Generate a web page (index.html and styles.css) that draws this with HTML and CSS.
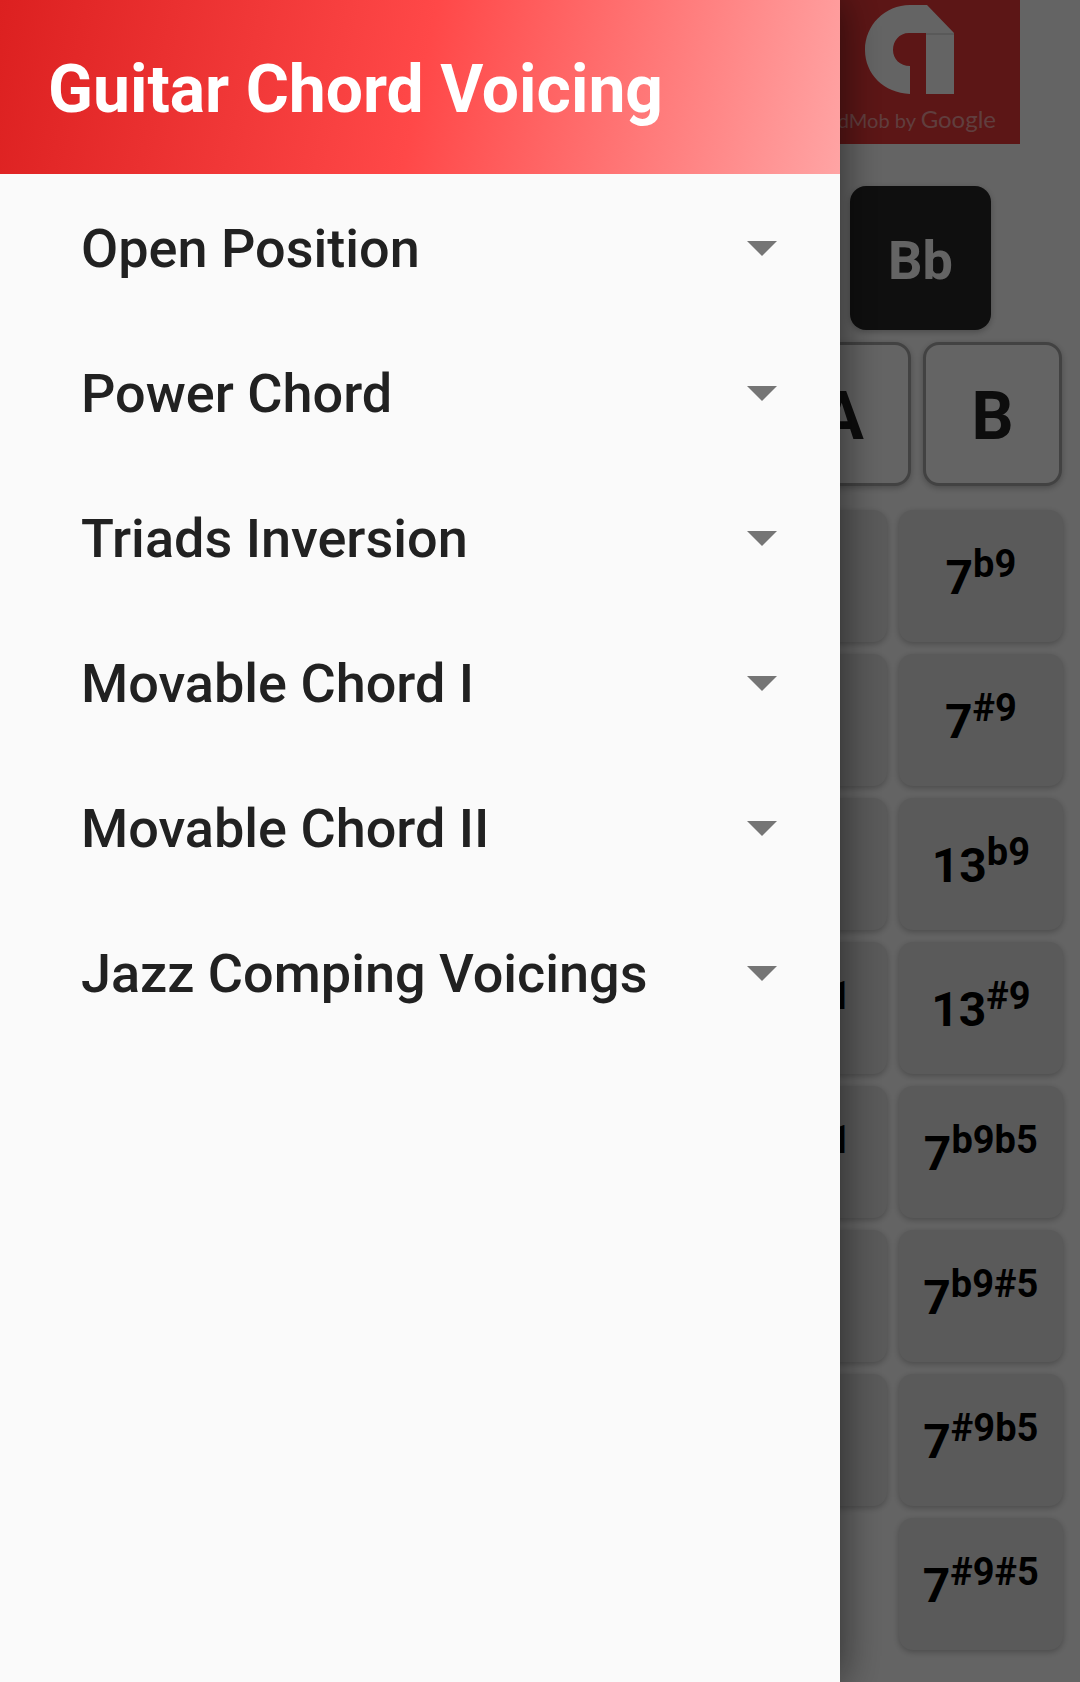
FILE: index.html
```html
<!DOCTYPE html>
<html lang="en">

<head>
  <meta charset="UTF-8">
  <meta name="viewport" content="width=device-width, initial-scale=1.0">
  <title>Guitar Chord Voicing</title>

  <link rel="stylesheet" href="styles.css">
</head>

<body>
  <main class="page">
    <div class="ad">
      <div class="ad-brand">
        <svg class="ad-logo" viewBox="0 0 90 90" aria-hidden="true">
          <path fill="#fafafa" d="M45 0H62L89 28V89H61V28H44C34 28 28 36 28 45C28 54 35 61 45 61V89C19 88 0 69 0 45C0 20 20 0 45 0Z" />
          <path fill="#dedede" d="M61 28H89V30H61Z" />
        </svg>
        <p class="ad-text">AdMob by <span>Google</span></p>
      </div>
    </div>

    <div class="keys black-keys">
      <button class="key black" type="button">Bb</button>
    </div>
    <div class="keys white-keys">
      <button class="key white" type="button">A</button>
      <button class="key white" type="button">B</button>
    </div>

    <div class="chords">
      <div class="column">
        <button class="chord" type="button"></button>
        <button class="chord" type="button"></button>
        <button class="chord" type="button"></button>
        <button class="chord" type="button">7<sup>#11</sup></button>
        <button class="chord" type="button">9<sup>#11</sup></button>
        <button class="chord" type="button"></button>
        <button class="chord" type="button"></button>
      </div>
      <div class="column">
        <button class="chord" type="button">7<sup>b9</sup></button>
        <button class="chord" type="button">7<sup>#9</sup></button>
        <button class="chord" type="button">13<sup>b9</sup></button>
        <button class="chord" type="button">13<sup>#9</sup></button>
        <button class="chord" type="button">7<sup>b9b5</sup></button>
        <button class="chord" type="button">7<sup>b9#5</sup></button>
        <button class="chord" type="button">7<sup>#9b5</sup></button>
        <button class="chord" type="button">7<sup>#9#5</sup></button>
      </div>
    </div>
  </main>

  <div class="scrim"></div>

  <aside class="drawer">
    <header class="drawer-header">
      <h1>Guitar Chord Voicing</h1>
    </header>
    <nav class="menu">
      <button class="menu-item" type="button">Open Position</button>
      <button class="menu-item" type="button">Power Chord</button>
      <button class="menu-item" type="button">Triads Inversion</button>
      <button class="menu-item" type="button">Movable Chord I</button>
      <button class="menu-item" type="button">Movable Chord II</button>
      <button class="menu-item" type="button">Jazz Comping Voicings</button>
    </nav>
  </aside>
</body>

</html>
```
FILE: styles.css
```css
* {
  margin: 0;
  padding: 0;
  box-sizing: border-box;
}

body {
  background: #fafafa;
  font-family: Roboto, "Liberation Sans", sans-serif;
}

button {
  border: 0;
  font-family: inherit;
  cursor: pointer;
}

.page {
  padding-bottom: 32px;
}

/* banner */
.ad {
  display: flex;
  justify-content: flex-end;
  height: 144px;
  margin: 0 60px;
  padding: 5px 24px 0 0;
  background: #e63737;
}

.ad-brand {
  display: flex;
  flex-direction: column;
  align-items: center;
  gap: 8px;
}

.ad-logo {
  width: 90px;
  height: 90px;
}

.ad-text {
  font-family: Lato, sans-serif;
  font-size: 20px;
  line-height: 32px;
  color: #f09c9c;
}

.ad-text span {
  font-size: 24px;
}

/* piano keys */
.keys {
  display: grid;
  grid-template-columns: repeat(7, 1fr);
  gap: 12px;
  padding: 0 18px;
}

.black-keys {
  display: flex;
  justify-content: flex-end;
  margin-top: 42px;
  padding-right: 89px;
}

.white-keys {
  margin-top: 12px;
}

.key {
  height: 144px;
  padding-top: 4px;
  border-radius: 16px;
  font-weight: 700;
  box-shadow: 0 2px 6px rgba(0, 0, 0, 0.25);
}

.black {
  width: 141px;
  background: #262626;
  color: #fafafa;
  font-size: 54px;
}

.white {
  border: 3px solid #a5a5a5;
  background: #fafafa;
  color: #212121;
  font-size: 66px;
}

.white:first-child {
  grid-column: 6;
}

/* chord types */
.chords {
  display: grid;
  grid-template-columns: repeat(6, 1fr);
  gap: 12px;
  margin-top: 24px;
  padding: 0 17px;
}

.column {
  display: flex;
  flex-direction: column;
  gap: 12px;
}

.column:first-child {
  grid-column: 5;
}

.chord {
  height: 132px;
  padding-bottom: 4px;
  border-radius: 14px;
  background: #e0e0e0;
  color: #000;
  font-size: 48px;
  font-weight: 700;
  box-shadow: 0 2px 6px rgba(0, 0, 0, 0.25);
}

.chord sup {
  font-size: 38px;
}

/* drawer */
.scrim {
  position: fixed;
  inset: 0;
  background: rgba(0, 0, 0, 0.6);
}

.drawer {
  position: fixed;
  top: 0;
  bottom: 0;
  left: 0;
  width: 77.8%;
  background: #fafafa;
  box-shadow: 0 0 40px rgba(0, 0, 0, 0.6);
}

.drawer-header {
  display: flex;
  align-items: center;
  height: 174px;
  padding: 4px 48px 0;
  background: linear-gradient(102deg, #dc2020, #ff4848 50%, #ffa4a4);
}

.drawer-header h1 {
  color: #fff;
  font-size: 66px;
  font-weight: 700;
}

.menu {
  padding-top: 2px;
}

.menu-item {
  display: flex;
  justify-content: space-between;
  align-items: center;
  width: 100%;
  height: 145px;
  padding: 0 63px 0 81px;
  background: none;
  color: #212121;
  font-size: 54px;
  font-weight: 500;
}

.menu-item::after {
  content: "";
  border: 15px solid transparent;
  border-top-color: #757575;
  border-bottom: 0;
}
```
